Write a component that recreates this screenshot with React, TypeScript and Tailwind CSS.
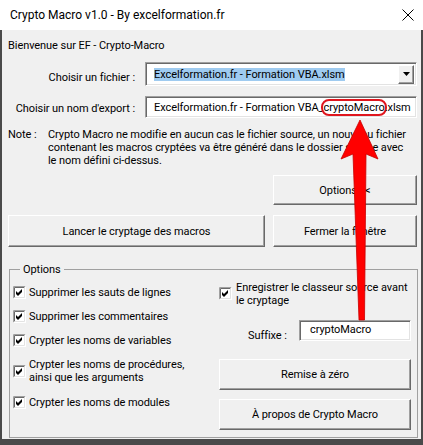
import type { ReactNode } from "react";
import clsx from "clsx";

function CheckBox() {
  return (
    <svg width="13" height="13" viewBox="0 0 13 13" className="shrink-0">
      <rect x="0" y="0" width="13" height="13" fill="#fff" />
      <path d="M0.5 12.5V0.5H12.5" stroke="#a0a0a0" fill="none" />
      <path d="M1.5 11.5V1.5H11.5" stroke="#696969" fill="none" />
      <path d="M0.5 12.5H12.5V0.5" stroke="#fff" fill="none" />
      <path d="M1.5 11.5H11.5V1.5" stroke="#e3e3e3" fill="none" />
      <polygon points="3,5 5,7 9,3 9,6 5,10 3,8" fill="#000" />
    </svg>
  );
}

function Btn({ children, className }: { children: ReactNode; className?: string }) {
  return (
    <button
      type="button"
      className={clsx(
        "flex items-center justify-center border border-t-white border-l-white border-b-[#696969] border-r-[#696969] bg-[#f0f0f0] leading-[13px] shadow-[inset_-1px_-1px_0_#a0a0a0]",
        className
      )}
    >
      {children}
    </button>
  );
}

const sunken =
  "border border-t-[#a0a0a0] border-l-[#a0a0a0] border-b-white border-r-white bg-white shadow-[inset_1px_1px_0_#696969,inset_-1px_-1px_0_#e3e3e3]";

export default function App() {
  return (
    <div className="relative h-[445px] w-[423px] overflow-hidden bg-[#f0f0f0] font-[Roboto,sans-serif] text-[11px] tracking-[-0.07px] text-black">
      {/* title bar */}
      <div className="flex h-[30px] items-center justify-between bg-white pl-[10px] pr-[9px]">
        <span className="text-[12px] tracking-normal">Crypto Macro v1.0 - By excelformation.fr</span>
        <svg width="12" height="12" viewBox="0 0 12 12">
          <path d="M0.5 0.5L11.5 11.5M11.5 0.5L0.5 11.5" stroke="#000" strokeWidth="1" />
        </svg>
      </div>

      <div className="flex h-[415px] flex-col border-x-2 border-b-[6px] border-[#4a4a4a] pl-[6px] pr-[4px] pt-[9px]">
        <div className="leading-[13px]">Bienvenue sur EF - Crypto-Macro</div>

        <div className="mt-[10px] flex h-[24px]">
          <div className="w-[127px] pt-[9px] text-right leading-[13px]">Choisir un fichier :</div>
          <div className={clsx("ml-[10px] flex flex-1 items-center pl-[8px] pr-[2px]", sunken)}>
            <span className="bg-[#9fcbf0] leading-[13px]">Excelformation.fr - Formation VBA.xlsm</span>
            <div className="ml-auto flex h-[19px] w-[16px] items-center justify-center border border-t-white border-l-white border-b-[#696969] border-r-[#696969] bg-[#f0f0f0] shadow-[inset_-1px_-1px_0_#a0a0a0]">
              <svg width="7" height="4" viewBox="0 0 7 4">
                <polygon points="0,0 7,0 3.5,4" fill="#000" />
              </svg>
            </div>
          </div>
        </div>

        <div className="mt-[10px] flex h-[22px]">
          <div className="w-[127px] pt-[6px] text-right leading-[13px]">Choisir un nom d'export :</div>
          <div className={clsx("ml-[10px] flex flex-1 items-center pl-[8px] leading-[13px]", sunken)}>
            Excelformation.fr - Formation VBA_
            <span className="rounded-[6px] outline-2 outline-[#e0161e]">cryptoMacro</span>
            .xlsm
          </div>
        </div>

        <div className="mt-[10px] flex leading-[13px]">
          <div className="w-[40px] shrink-0">Note :</div>
          <p>
            Crypto Macro ne modifie en aucun cas le fichier source, un nouveau fichier
            <br />
            contenant les macros cryptées va être généré dans le dossier source avec
            <br />
            le nom défini ci-dessus.
          </p>
        </div>

        <div className="mt-[8px] flex justify-end">
          <Btn className="h-[30px] w-[144px]">Options &lt;&lt;</Btn>
        </div>

        <div className="mt-[10px] flex gap-[8px]">
          <Btn className="h-[32px] flex-1">Lancer le cryptage des macros</Btn>
          <Btn className="h-[32px] w-[144px]">Fermer la fenêtre</Btn>
        </div>

        <fieldset className="-mr-[1px] ml-[1px] mt-[16px] border border-[#a0a0a0] pb-[7px] pl-[3px] pr-[6px] pt-[4px]">
          <legend className="ml-[7px] px-[3px] leading-[13px]">Options</legend>
          <div className="flex">
            <div className="flex w-[206px] flex-col leading-[13px]">
              <div className="flex h-[24px] items-center gap-[3px]">
                <CheckBox />
                <span>Supprimer les sauts de lignes</span>
              </div>
              <div className="flex h-[24px] items-center gap-[3px]">
                <CheckBox />
                <span>Supprimer les commentaires</span>
              </div>
              <div className="flex h-[24px] items-center gap-[3px]">
                <CheckBox />
                <span>Crypter les noms de variables</span>
              </div>
              <div className="flex h-[38px] items-center gap-[3px]">
                <CheckBox />
                <span>
                  Crypter les noms de procédures,
                  <br />
                  ainsi que les arguments
                </span>
              </div>
              <div className="flex h-[24px] items-center gap-[3px]">
                <CheckBox />
                <span>Crypter les noms de modules</span>
              </div>
            </div>

            <div className="flex w-[192px] flex-col leading-[13px]">
              <div className="flex items-start gap-[4px] pt-[1px]">
                <div className="mt-[6px]">
                  <CheckBox />
                </div>
                <span>
                  Enregistrer le classeur source avant
                  <br />
                  le cryptage
                </span>
              </div>
              <div className="mt-[13px] flex h-[21px]">
                <div className="w-[80px] pl-[29px] pt-[9px]">Suffixe :</div>
                <div className={clsx("flex-1 pl-[10px] pt-[2px]", sunken)}>cryptoMacro</div>
              </div>
              <Btn className="mt-[18px] h-[31px] w-full">Remise à zéro</Btn>
              <Btn className="mt-[9px] h-[31px] w-full">À propos de Crypto Macro</Btn>
            </div>
          </div>
        </fieldset>
      </div>

      {/* red annotation arrow drawn over the dialog */}
      <svg
        className="pointer-events-none absolute left-0 top-0"
        width="423"
        height="445"
        viewBox="0 0 423 445"
      >
        <polygon
          points="360,120 378,159 366,154 364.5,320 359,320 353,154 341,159"
          fill="#f00"
          stroke="#c80000"
          strokeWidth="0.8"
          strokeLinejoin="round"
        />
      </svg>
    </div>
  );
}
